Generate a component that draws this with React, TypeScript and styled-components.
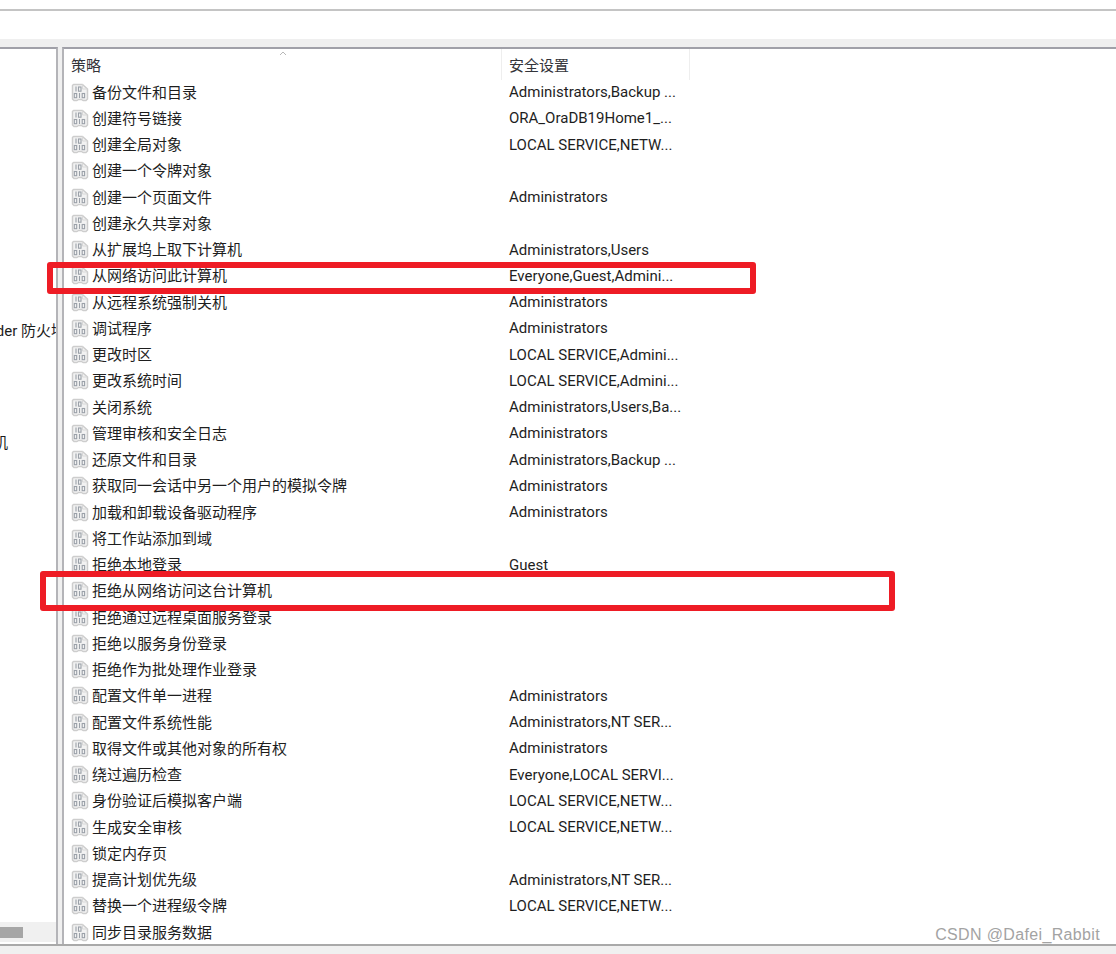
import React from "react";
import styled, { createGlobalStyle } from "styled-components";

const Global = createGlobalStyle`
  html, body { margin: 0; padding: 0; background: #f0f0f0; }
  body { font-family: "Roboto", "Noto Sans CJK SC", sans-serif; }
`;

const Page = styled.div`
  position: relative;
  width: 1116px;
  height: 954px;
  overflow: hidden;
  display: flex;
  flex-direction: column;
  background: #f0f0f0;
`;
const TopStrip = styled.div`
  height: 9px;
  background: #fff;
  border-bottom: 2px solid #c4c4c4;
`;
const Toolbar = styled.div`
  height: 28px;
  background: #fff;
`;
const Band = styled.div`
  height: 8px;
  background: #efefef;
`;
const Panes = styled.div`
  display: flex;
  gap: 4px;
  height: 897px;
  border-bottom: 2px solid #a9a9a9;
`;
const TreePane = styled.aside`
  position: relative;
  width: 56px;
  flex: none;
  background: #fff;
  border-top: 2px solid #a0a0a8;
  border-right: 2px solid #b4b4b8;
  display: flex;
  flex-direction: column;
  overflow: hidden;
`;
const TreeRow = styled.div<{ $top: number; $right: number }>`
  margin-top: ${(p) => p.$top}px;
  height: 24px;
  line-height: 24px;
  font-size: 15px;
  white-space: nowrap;
  color: #1c1c1c;
  text-align: right;
  margin-right: ${(p) => p.$right}px;
  display: flex;
  justify-content: flex-end;
`;
const Spacer = styled.div`
  flex: 1;
`;
const ScrollTrack = styled.div`
  height: 20px;
  margin-bottom: 2px;
  background: #f0f0f0;
  display: flex;
  align-items: center;
`;
const ScrollThumb = styled.div`
  width: 23px;
  height: 11px;
  background: #a6a6a6;
`;
const ListPane = styled.main`
  flex: 1;
  background: #fff;
  border-top: 2px solid #a0a0a8;
  border-left: 2px solid #b4b4b8;
  display: flex;
  flex-direction: column;
  overflow: hidden;
`;
const Header = styled.div`
  position: relative;
  display: flex;
  height: 31px;
  flex: none;
`;
const HeadCell = styled.div<{ $w: number; $pad: number; $sep?: boolean }>`
  width: ${(p) => p.$w}px;
  box-sizing: border-box;
  padding: 6px 0 0 ${(p) => p.$pad}px;
  font-size: 15px;
  line-height: 22px;
  color: #33343a;
  border-right: ${(p) => (p.$sep ? "1px solid #eeeeee" : "none")};
`;
const SortMark = styled.svg`
  position: absolute;
  left: 215px;
  top: 2px;
`;
const Rows = styled.div`
  display: flex;
  flex-direction: column;
  margin-top: -1px;
`;
const Row = styled.div`
  display: flex;
  align-items: center;
  height: 26.25px;
  flex: none;
  font-size: 15px;
  color: #1e1e1e;
  white-space: nowrap;
`;
const NameCell = styled.div`
  width: 437px;
  padding-left: 7px;
  box-sizing: border-box;
  display: flex;
  align-items: center;
  gap: 3px;
`;
const NameLabel = styled.span`
  padding-bottom: 2px;
`;
const ValueCell = styled.div`
  padding-left: 8px;
`;
const RedBox = styled.div<{ $x: number; $y: number; $w: number; $h: number }>`
  position: absolute;
  left: ${(p) => p.$x}px;
  top: ${(p) => p.$y}px;
  width: ${(p) => p.$w}px;
  height: ${(p) => p.$h}px;
  box-sizing: border-box;
  border: 6px solid #ee1c25;
  border-radius: 3px;
`;
const Watermark = styled.div`
  position: absolute;
  right: 16px;
  top: 925px;
  font-family: "Liberation Sans", sans-serif;
  font-size: 16px;
  line-height: 20px;
  color: #a3a3a3;
  letter-spacing: 0.35px;
`;

const PolicyIcon = () => (
  <svg width="18" height="19" viewBox="0 0 18 19" fill="none">
    <path d="M2.5 1.5H11.5L16.5 6V16L15 17.5H12L10.5 16.5H7.5L6 17.5H3L1.5 16V2.5Z" fill="#f2f2f2" stroke="#cdcdcd" strokeWidth="1.5" strokeLinejoin="round" />
    <path d="M11.5 1.5V6H16.5" stroke="#d8d8d8" />
    <g stroke="#9aa0a8" strokeWidth="1.1">
      <path d="M5 3.5v5" />
      <rect x="7.5" y="4" width="2.5" height="4.2" />
      <rect x="3.3" y="10.5" width="2.4" height="4.2" />
      <path d="M8.5 10v5" />
      <rect x="11.2" y="10.5" width="2.4" height="4.2" />
    </g>
  </svg>
);

const rows: [string, string][] = [
  ["备份文件和目录", "Administrators,Backup ..."],
  ["创建符号链接", "ORA_OraDB19Home1_..."],
  ["创建全局对象", "LOCAL SERVICE,NETW..."],
  ["创建一个令牌对象", ""],
  ["创建一个页面文件", "Administrators"],
  ["创建永久共享对象", ""],
  ["从扩展坞上取下计算机", "Administrators,Users"],
  ["从网络访问此计算机", "Everyone,Guest,Admini..."],
  ["从远程系统强制关机", "Administrators"],
  ["调试程序", "Administrators"],
  ["更改时区", "LOCAL SERVICE,Admini..."],
  ["更改系统时间", "LOCAL SERVICE,Admini..."],
  ["关闭系统", "Administrators,Users,Ba..."],
  ["管理审核和安全日志", "Administrators"],
  ["还原文件和目录", "Administrators,Backup ..."],
  ["获取同一会话中另一个用户的模拟令牌", "Administrators"],
  ["加载和卸载设备驱动程序", "Administrators"],
  ["将工作站添加到域", ""],
  ["拒绝本地登录", "Guest"],
  ["拒绝从网络访问这台计算机", ""],
  ["拒绝通过远程桌面服务登录", ""],
  ["拒绝以服务身份登录", ""],
  ["拒绝作为批处理作业登录", ""],
  ["配置文件单一进程", "Administrators"],
  ["配置文件系统性能", "Administrators,NT SER..."],
  ["取得文件或其他对象的所有权", "Administrators"],
  ["绕过遍历检查", "Everyone,LOCAL SERVI..."],
  ["身份验证后模拟客户端", "LOCAL SERVICE,NETW..."],
  ["生成安全审核", "LOCAL SERVICE,NETW..."],
  ["锁定内存页", ""],
  ["提高计划优先级", "Administrators,NT SER..."],
  ["替换一个进程级令牌", "LOCAL SERVICE,NETW..."],
  ["同步目录服务数据", ""],
];

export default function App() {
  return (
    <Page>
      <Global />
      <TopStrip />
      <Toolbar />
      <Band />
      <Panes>
        <TreePane>
          <TreeRow $top={270} $right={-10}>der 防火墙</TreeRow>
          <TreeRow $top={88} $right={48}>机</TreeRow>
          <Spacer />
          <ScrollTrack>
            <ScrollThumb />
          </ScrollTrack>
        </TreePane>
        <ListPane>
          <Header>
            <HeadCell $w={438} $pad={7} $sep>策略</HeadCell>
            <HeadCell $w={188} $pad={7} $sep>安全设置</HeadCell>
            <SortMark width="8" height="5" viewBox="0 0 8 5" fill="none">
              <path d="M1 4L4 1L7 4" stroke="#b8b8b8" />
            </SortMark>
          </Header>
          <Rows>
            {rows.map(([name, value]) => (
              <Row key={name}>
                <NameCell>
                  <PolicyIcon />
                  <NameLabel>{name}</NameLabel>
                </NameCell>
                <ValueCell>{value}</ValueCell>
              </Row>
            ))}
          </Rows>
        </ListPane>
      </Panes>
      <RedBox $x={47} $y={262} $w={709} $h={32} />
      <RedBox $x={40} $y={571} $w={855} $h={40} />
      <Watermark>CSDN @Dafei_Rabbit</Watermark>
    </Page>
  );
}
